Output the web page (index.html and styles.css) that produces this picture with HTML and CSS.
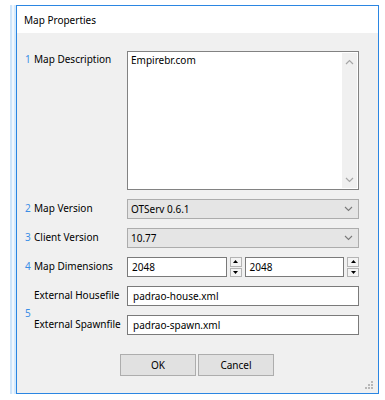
FILE: index.html
```html
<!DOCTYPE html>
<html>
<head>
<meta charset="utf-8">
<link rel="stylesheet" href="styles.css">
</head>
<body>
<div class="win">
  <div class="titlebar">Map Properties</div>
  <div class="content">
    <div class="form">
      <div class="label top"><span class="num">1</span>Map Description</div>
      <div class="memo">
        <div class="memo-text">Empirebr.com</div>
        <div class="vscroll">
          <svg width="9" height="6" viewBox="0 0 9 6"><path d="M1 5 L4.5 1.5 L8 5" fill="none" stroke="#a6a6a6" stroke-width="1.2"/></svg>
          <svg width="9" height="6" viewBox="0 0 9 6"><path d="M1 1 L4.5 4.5 L8 1" fill="none" stroke="#a6a6a6" stroke-width="1.2"/></svg>
        </div>
      </div>

      <div class="label"><span class="num">2</span>Map Version</div>
      <div class="combo"><span>OTServ 0.6.1</span>
        <svg width="9" height="6" viewBox="0 0 9 6"><path d="M1 1 L4.5 4.5 L8 1" fill="none" stroke="#7a7a7a" stroke-width="1.1"/></svg>
      </div>

      <div class="label"><span class="num">3</span>Client Version</div>
      <div class="combo"><span>10.77</span>
        <svg width="9" height="6" viewBox="0 0 9 6"><path d="M1 1 L4.5 4.5 L8 1" fill="none" stroke="#7a7a7a" stroke-width="1.1"/></svg>
      </div>

      <div class="label"><span class="num">4</span>Map Dimensions</div>
      <div class="dims">
        <div class="spin">
          <div class="edit">2048</div>
          <div class="spinbtns">
            <div class="sb"><svg width="5" height="3" viewBox="0 0 5 3"><path d="M0 3 L2.5 0 L5 3 Z" fill="#000"/></svg></div>
            <div class="sb"><svg width="5" height="3" viewBox="0 0 5 3"><path d="M0 0 L2.5 3 L5 0 Z" fill="#000"/></svg></div>
          </div>
        </div>
        <div class="spin">
          <div class="edit">2048</div>
          <div class="spinbtns">
            <div class="sb"><svg width="5" height="3" viewBox="0 0 5 3"><path d="M0 3 L2.5 0 L5 3 Z" fill="#000"/></svg></div>
            <div class="sb"><svg width="5" height="3" viewBox="0 0 5 3"><path d="M0 0 L2.5 3 L5 0 Z" fill="#000"/></svg></div>
          </div>
        </div>
      </div>

      <div class="group-num num">5</div>
      <div class="label sub r5">External Housefile</div>
      <div class="edit full r5c">padrao-house.xml</div>
      <div class="label sub r6">External Spawnfile</div>
      <div class="edit full r6c">padrao-spawn.xml</div>
    </div>

    <div class="buttons">
      <div class="btn">OK</div>
      <div class="btn">Cancel</div>
    </div>
    <div class="grip">
      <svg width="9" height="9" viewBox="0 0 9 9" fill="#b8b8b8">
        <rect x="6" y="0" width="2" height="2"/>
        <rect x="3" y="3" width="2" height="2"/><rect x="6" y="3" width="2" height="2"/>
        <rect x="0" y="6" width="2" height="2"/><rect x="3" y="6" width="2" height="2"/><rect x="6" y="6" width="2" height="2"/>
      </svg>
    </div>
  </div>
</div>
</body>
</html>
```

FILE: styles.css
```css
html, body {
  margin: 0;
  padding: 0;
  background: #ffffff;
}
body {
  font-family: "Noto Sans", "Liberation Sans", sans-serif;
  font-size: 10px;
  color: #000;
}
.win {
  position: relative;
  margin: 5px 0 0 16px;
  width: 361px;
  height: 387px;
  border: 1px solid #2b86e2;
  background: #f0f0f0;
  box-shadow: -2px 0 0 #d6eafb, -4px 0 0 #f2f8fe, -6px 0 0 #cfe5fa;
  display: flex;
  flex-direction: column;
}
.titlebar {
  height: 27px;
  background: #ffffff;
  padding-left: 7px;
  line-height: 28px;
  font-size: 10px;
  color: #000;
}
.content {
  position: relative;
  flex: 1;
  padding: 18px 18px 0 8px;
}
.form {
  display: grid;
  grid-template-columns: 102px 232px;
  grid-template-rows: 139px 20px 20px 20px 20px 20px;
  row-gap: 9px;
}
.label {
  display: flex;
  align-items: center;
  white-space: nowrap;
  color: #000;
  position: relative;
  top: -1px;
}
.label.top {
  align-items: flex-start;
  top: 1px;
}
.num {
  color: #3a8ee6;
  width: 9px;
  display: inline-block;
}
.memo {
  background: #fff;
  border: 1px solid #828282;
  box-sizing: border-box;
  display: flex;
  justify-content: space-between;
}
.memo-text {
  padding: 1px 0 0 3px;
  line-height: 15px;
}
.vscroll {
  width: 15px;
  margin: 1px 1px 1px 0;
  background: #f0f0f0;
  display: flex;
  flex-direction: column;
  justify-content: space-between;
  align-items: center;
  padding: 6px 0 5px;
}
.combo {
  background: #e5e5e5;
  border: 1px solid #acacac;
  box-sizing: border-box;
  display: flex;
  align-items: center;
  justify-content: space-between;
  padding: 0 5px 0 3px;
}
.dims {
  display: flex;
  gap: 3px;
}
.spin {
  display: flex;
  gap: 3px;
  flex: 1;
}
.spin .edit {
  flex: 1;
}
.edit {
  background: #fff;
  border: 1px solid #7a7a7a;
  box-sizing: border-box;
  display: flex;
  align-items: center;
  padding-left: 4px;
}
.spinbtns {
  width: 12px;
  display: flex;
  flex-direction: column;
  gap: 1px;
}
.sb {
  flex: 1;
  background: #f4f4f4;
  border: 1px solid #b4b4b4;
  box-sizing: border-box;
  display: flex;
  align-items: center;
  justify-content: center;
}
.sb svg { display: block; }
.group-num {
  grid-column: 1;
  grid-row: 5 / span 2;
  align-self: center;
  position: relative;
  top: 2px;
}
.sub {
  padding-left: 9px;
}
.r5 { grid-column: 1; grid-row: 5; }
.r5c { grid-column: 2; grid-row: 5; }
.r6 { grid-column: 1; grid-row: 6; }
.r6c { grid-column: 2; grid-row: 6; }
.full { padding-left: 5px; }
.buttons {
  display: flex;
  gap: 2px;
  margin: 19px 0 0 95px;
}
.btn {
  width: 76px;
  height: 22px;
  box-sizing: border-box;
  background: #e1e1e1;
  border: 1px solid #adadad;
  display: flex;
  align-items: center;
  justify-content: center;
}
.grip {
  position: absolute;
  right: 4px;
  bottom: 3px;
  line-height: 0;
}
```
